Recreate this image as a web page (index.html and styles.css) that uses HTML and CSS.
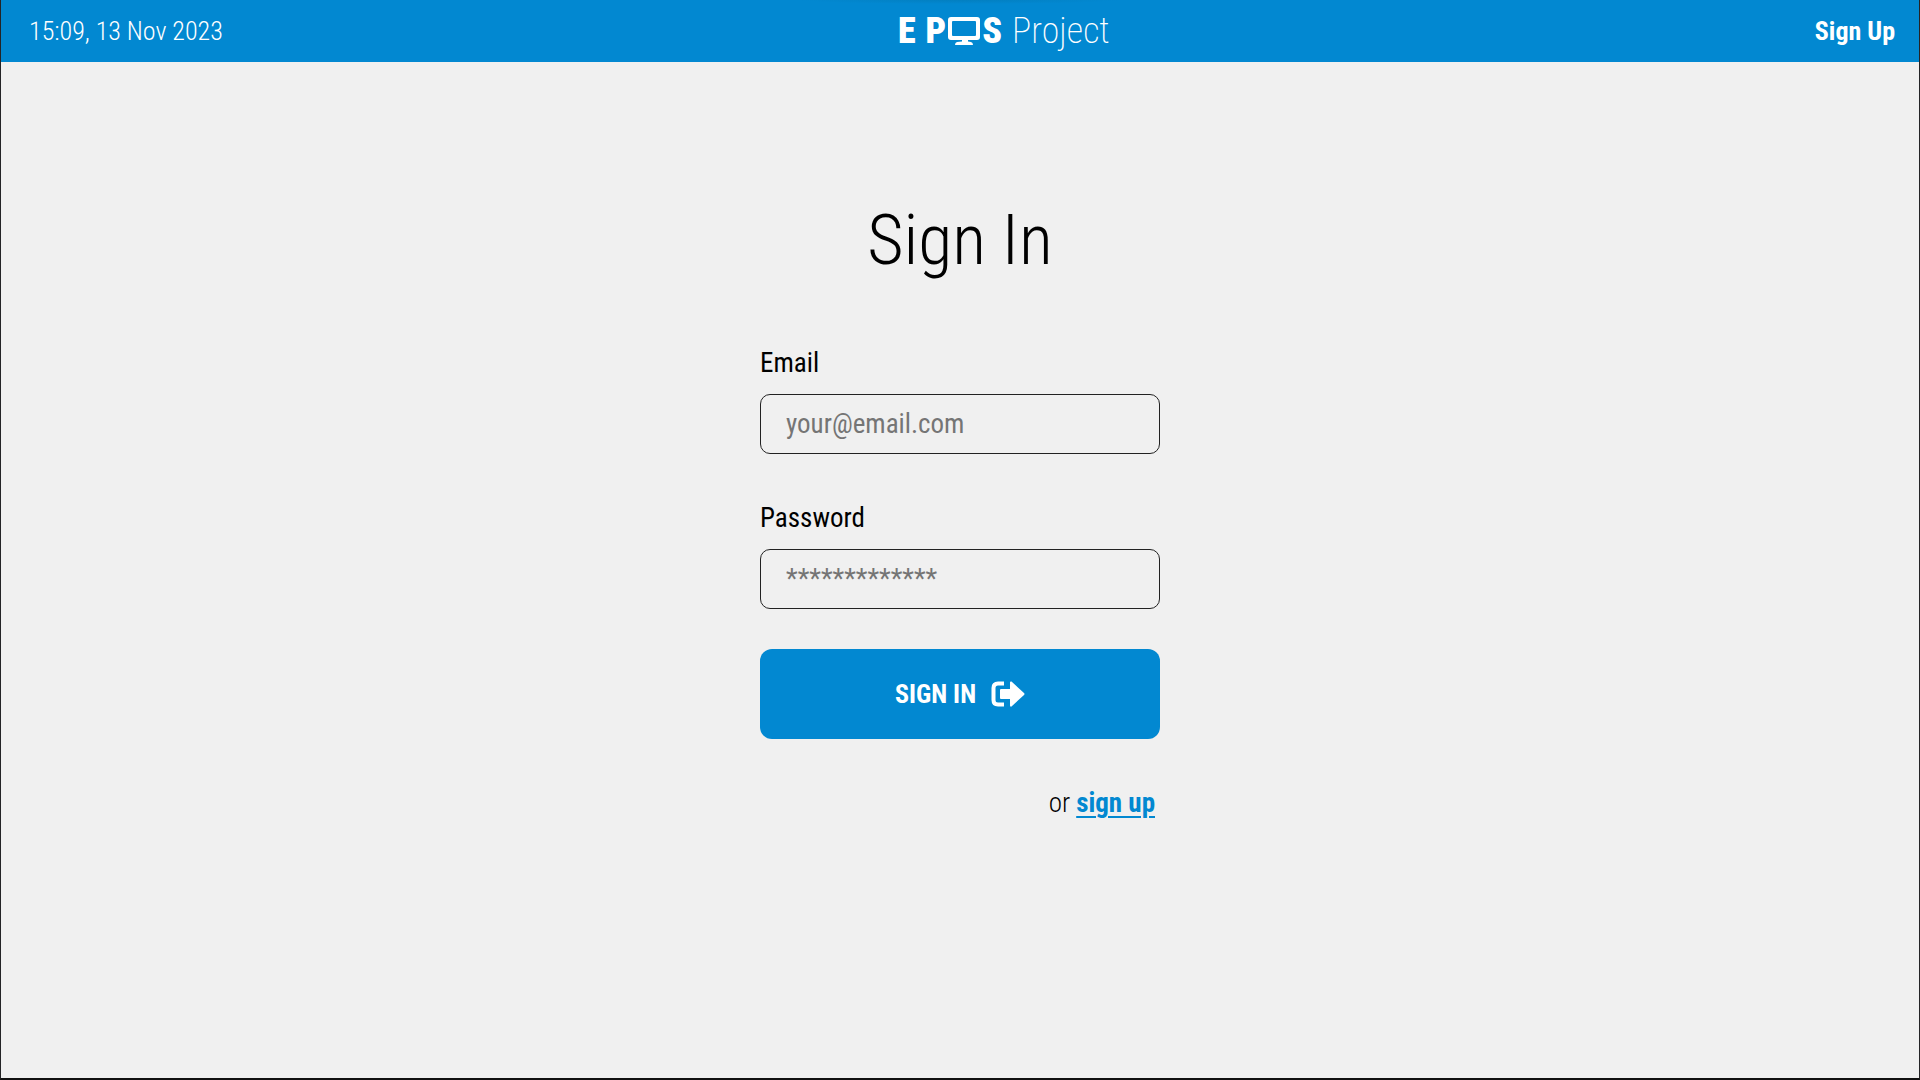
FILE: index.html
```html
<!DOCTYPE html>
<html lang="en">
<head>
<meta charset="utf-8">
<meta name="viewport" content="width=device-width, initial-scale=1">
<title>E POS Project - Sign In</title>
<link rel="stylesheet" href="styles.css">
</head>
<body>
<header class="topbar">
  <time class="clock" datetime="2023-11-13T15:09">15:09, 13 Nov 2023</time>
  <div class="brand">
    <span class="brand-word">E</span>
    <span class="brand-pos">
      <span class="brand-word">P</span>
      <svg class="monitor" viewBox="0 0 32 28" aria-hidden="true">
        <path fill="#fff" fill-rule="evenodd" d="M3 0H29Q32 0 32 3V20Q32 23 29 23H20V24.500L23 25Q25 25.300 25 28H7Q7 25.300 9 25L14 24.500V23H3Q0 23 0 20V3Q0 0 3 0ZM5 4Q4 4 4 5V18Q4 19 5 19H27Q28 19 28 18V5Q28 4 27 4Z"/>
      </svg>
      <span class="brand-word">S</span>
    </span>
    <span class="brand-light">Project</span>
  </div>
  <a class="nav-link" href="#signup">Sign Up</a>
</header>
<main class="page">
  <h1 class="title">Sign In</h1>
  <form class="form">
    <div class="field">
      <label for="email">Email</label>
      <input class="input" id="email" type="email" placeholder="your@email.com">
    </div>
    <div class="field">
      <label for="password">Password</label>
      <input class="input" id="password" type="password" placeholder="*************">
    </div>
    <button class="submit" type="submit">
      SIGN IN
      <svg class="exit" viewBox="0 0 34 26" aria-hidden="true">
        <path fill="none" stroke="#fff" stroke-width="4" d="M13 2.500H7Q2.500 2.500 2.500 7V19Q2.500 23.500 7 23.500H13"/>
        <path fill="#fff" d="M10 8H19V1.500Q19 0 20.500 0.500L33 12Q34 13 33 14L20.500 25.500Q19 26 19 24.500V18H10Q9 18 9 17V9Q9 8 10 8Z"/>
      </svg>
    </button>
    <p class="alternative">or <a href="#signup">sign up</a></p>
  </form>
</main>
</body>
</html>
```
FILE: styles.css
```css
* {
  box-sizing: border-box;
}

body {
  margin: 0;
  min-height: 100vh;
  display: flex;
  flex-direction: column;
  border: 1px solid #242426;
  border-top: 0;
  border-bottom: 2px solid #111;
  background: #f0f0f0;
  color: #000;
  font-family: "Saira Extra Condensed", "Roboto Condensed", "Liberation Sans Narrow", sans-serif;
  font-size: 27px;
  line-height: 32px;
}

.topbar {
  display: flex;
  align-items: center;
  justify-content: space-between;
  height: 62px;
  padding: 0 24px 0 28px;
  background: radial-gradient(160px 4px at 50% 0, #037fc0, #0288d1) #0288d1;
  color: #fff;
  font-size: 26px;
}

.clock {
  font-weight: 300;
}

.brand {
  display: flex;
  align-items: center;
  gap: 10px;
  margin-right: 30px;
  font-size: 36px;
  line-height: 40px;
}

.brand-pos {
  display: flex;
  align-items: center;
  gap: 2px;
}

.brand-word {
  font-weight: 900;
}

.brand-light {
  font-weight: 200;
}

.monitor {
  width: 32px;
  height: 28px;
}

.nav-link {
  color: inherit;
  font-weight: 700;
  text-decoration: none;
}

.page {
  flex: 1;
  display: flex;
  flex-direction: column;
  align-items: center;
  padding: 134px 24px 48px;
}

.title {
  margin: 0 0 63px;
  font-size: 70px;
  font-weight: 300;
  line-height: 88px;
}

.form {
  display: flex;
  flex-direction: column;
  width: 100%;
  max-width: 400px;
}

.field {
  display: flex;
  flex-direction: column;
  gap: 15px;
  margin-bottom: 48px;
}

.field + .submit {
  margin-top: -8px;
}

.input {
  width: 100%;
  height: 60px;
  padding: 0 25px;
  border: 1px solid #222;
  border-radius: 10px;
  background: transparent;
  font: inherit;
}

.input::placeholder {
  color: #757575;
  opacity: 1;
}

.submit {
  display: flex;
  align-items: center;
  justify-content: center;
  gap: 15px;
  height: 90px;
  border: 0;
  border-radius: 12px;
  background: #0288d1;
  color: #fff;
  font: inherit;
  font-size: 26px;
  font-weight: 700;
}

.exit {
  width: 34px;
  height: 26px;
}

.alternative {
  margin: 48px 5px 0;
  font-weight: 300;
  text-align: right;
}

.alternative a {
  color: #0288d1;
  font-weight: 700;
  text-decoration-thickness: 2px;
  text-underline-offset: 4px;
}
```
